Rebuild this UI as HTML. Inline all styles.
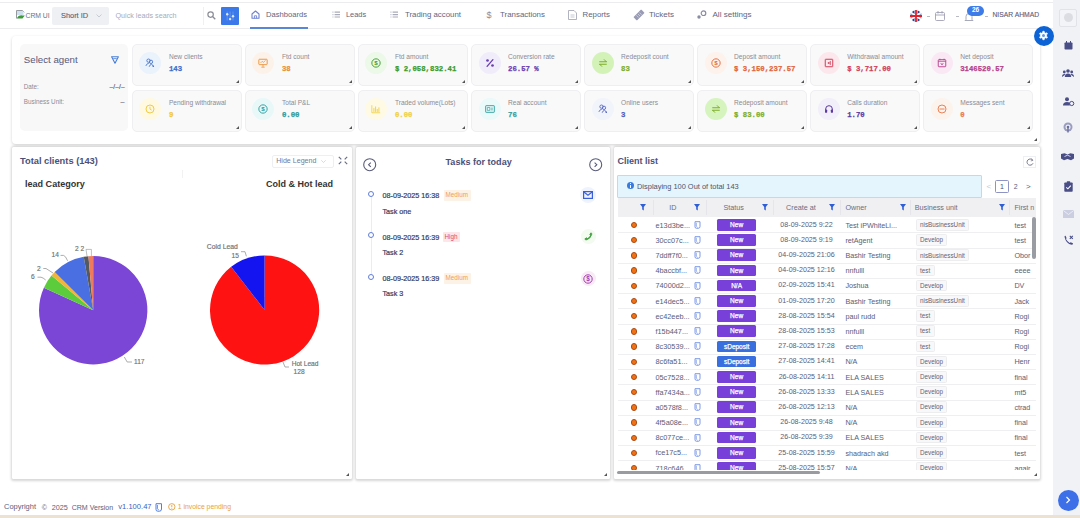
<!DOCTYPE html>
<html><head><meta charset="utf-8">
<style>
*{box-sizing:border-box;margin:0;padding:0}
html,body{width:1080px;height:518px;overflow:hidden;background:#fff;font-family:"Liberation Sans",sans-serif;color:#5b5e7a}
.a{position:absolute}
.t{position:absolute;white-space:nowrap;line-height:1}
svg{position:absolute;overflow:visible}
#top{left:0;top:2px;width:1053px;height:27px;background:#fff;border-top:1px solid #ececee;border-bottom:1px solid #ececee}
#side{left:1053px;top:0;width:27px;height:518px;background:#f1f2f6}
#stats{left:12px;top:36px;width:1028px;height:108px;background:#fff;border-radius:4px;box-shadow:0 1px 3px rgba(0,0,0,.18)}
.card{position:absolute;width:109.5px;height:42px;background:#f9f9fa;border:1px solid #efeff1;border-radius:5px}
.rz{position:absolute;width:0;height:0;border-left:3px solid transparent;border-bottom:3px solid #555}
.panel{position:absolute;top:147px;height:332px;background:#fff;border-radius:1.5px;box-shadow:0 .5px 2.5px 1px rgba(0,0,0,.16)}
</style></head><body>
<div id="top" class="a"></div>
<div id="side" class="a"></div>
<svg style="left:16px;top:9.5px" width="9" height="9" viewBox="0 0 9 9"><path d="M.5 .5h6l1.8 1.8" fill="none" stroke="#8a8f96" stroke-width=".9"/><path d="M.5 .5V8.5" stroke="#8a8f96" stroke-width=".9"/><rect x="1" y="1" width="6.5" height="4" fill="#cfe0f0"/><path d="M.8 8.6 Q2.5 4.8 6.5 5.4 L8.8 5.6 L6.5 8.6z" fill="#3f9a3a"/></svg>
<div class="t" style="left:25.5px;top:13.20px;font-size:6.8px;color:#6c6f80;font-weight:normal;">CRM UI</div>
<div class="a" style="left:52px;top:7px;width:57px;height:18px;background:#eef0f3;border-radius:2px"></div>
<div class="t" style="left:61px;top:12.20px;font-size:7.4px;color:#5d607c;font-weight:normal;-webkit-text-stroke:.12px #5d607c">Short ID</div>
<svg style="left:96px;top:13.5px" width="6" height="4" viewBox="0 0 6 4"><path d="M.5 .5 L3 3 L5.5 .5" fill="none" stroke="#b8bac4" stroke-width=".7"/></svg>
<div class="a" style="left:109px;top:7px;width:95px;height:18px;background:#fff;border-right:1px solid #f0f0f2"></div>
<div class="t" style="left:115.5px;top:12.30px;font-size:7.2px;color:#a9abb8;font-weight:normal;">Quick leads search</div>
<svg style="left:207px;top:11px" width="9" height="9" viewBox="0 0 9 9"><circle cx="3.6" cy="3.6" r="2.7" fill="none" stroke="#8a8c96" stroke-width="1.2"/><path d="M5.8 5.8 L8.3 8.3" stroke="#8a8c96" stroke-width="1.3"/></svg>
<div class="a" style="left:221.3px;top:7px;width:17.5px;height:17.5px;background:#3b78ea;border-radius:1px"></div>
<svg style="left:224px;top:9.5px" width="12" height="12" viewBox="0 0 12 12"><path d="M3.2 1.5v9M6.1 1.5v9M9 1.5v9" stroke="#7fa8f0" stroke-width=".6"/><circle cx="3.2" cy="4.2" r="1.2" fill="#dce8fc"/><circle cx="9" cy="6.2" r="1.2" fill="#dce8fc"/><circle cx="6.1" cy="9.1" r="1.2" fill="#dce8fc"/></svg>
<svg style="left:251px;top:10px" width="9" height="9" viewBox="0 0 9 9"><path d="M1 4 L4.5 1 L8 4 V8.3 H1z" fill="none" stroke="#6f82d2" stroke-width="1.1" stroke-linejoin="round"/><path d="M3.4 8.3V5.8h2.2v2.5" fill="none" stroke="#6f82d2" stroke-width=".9"/></svg>
<div class="t" style="left:266px;top:11.30px;font-size:7.6px;color:#62657f;font-weight:normal;">Dashboards</div>
<div class="a" style="left:250px;top:27px;width:58px;height:1.6px;background:#5a86d6"></div>
<svg style="left:331.5px;top:11px" width="9" height="8" viewBox="0 0 9 8"><path d="M0 1.2h1.8M0 3.6h1.8M0 6h1.8" stroke="#d8d9e0" stroke-width="1.2"/><path d="M2.6 1.2h5.4M2.6 3.6h5.4M2.6 6h5.4" stroke="#a9abb8" stroke-width="1.2"/></svg>
<div class="t" style="left:346px;top:11.40px;font-size:7.4px;color:#62657f;font-weight:normal;">Leads</div>
<svg style="left:389.5px;top:11px" width="9" height="8" viewBox="0 0 9 8"><path d="M0 1.2h1.8M0 3.6h1.8M0 6h1.8" stroke="#d8d9e0" stroke-width="1.2"/><path d="M2.6 1.2h5.4M2.6 3.6h5.4M2.6 6h5.4" stroke="#a9abb8" stroke-width="1.2"/></svg>
<div class="t" style="left:405px;top:11.18px;font-size:7.85px;color:#62657f;font-weight:normal;">Trading account</div>
<div class="t" style="left:486.5px;top:10.60px;font-size:9px;color:#8a8ca0;font-weight:normal;">$</div>
<div class="t" style="left:500px;top:11.15px;font-size:7.9px;color:#62657f;font-weight:normal;">Transactions</div>
<svg style="left:568px;top:10px" width="9" height="10" viewBox="0 0 9 10"><path d="M.5 .5h5.5l2.5 2.5v6.5h-8z" fill="none" stroke="#9ea0b0" stroke-width=".8"/><path d="M2.5 5h4M2.5 7h4" stroke="#b0b2c0" stroke-width=".7"/></svg>
<div class="t" style="left:582.5px;top:11.18px;font-size:7.85px;color:#62657f;font-weight:normal;">Reports</div>
<svg style="left:634px;top:10px" width="10" height="10" viewBox="0 0 10 10"><g transform="rotate(45 5 5)"><rect x="2.6" y="-.5" width="4.8" height="11" rx=".6" fill="#9a9cb6"/><path d="M3.5 3H6.5M3.5 5H6.5M3.5 7H6.5" stroke="#e8e9f0" stroke-width=".6"/></g></svg>
<div class="t" style="left:649px;top:11.10px;font-size:8px;color:#62657f;font-weight:normal;">Tickets</div>
<svg style="left:697px;top:10px" width="10" height="9" viewBox="0 0 10 9"><circle cx="6.5" cy="3.2" r="2.3" fill="none" stroke="#8a8ca4" stroke-width="1.2"/><circle cx="2" cy="7" r="1.7" fill="#8a8ca4"/></svg>
<div class="t" style="left:712.5px;top:11.07px;font-size:8.05px;color:#62657f;font-weight:normal;">All settings</div>
<svg style="left:910px;top:10px" width="12" height="12" viewBox="0 0 12 12"><circle cx="6" cy="6" r="5.8" fill="#2b3a8a"/><path d="M1 2.5 L11 9.5 M11 2.5 L1 9.5" stroke="#fff" stroke-width="1.6"/><path d="M6 0v12M0 6h12" stroke="#fff" stroke-width="3"/><path d="M6 0v12M0 6h12" stroke="#e0202a" stroke-width="1.8"/></svg>
<div class="a" style="left:927px;top:15.5px;width:3px;height:1px;background:#b8bac4"></div>
<svg style="left:935px;top:11px" width="10" height="10" viewBox="0 0 10 10"><rect x=".5" y="1.5" width="9" height="8" rx="1" fill="none" stroke="#a0a2b4" stroke-width=".9"/><path d="M.5 4h9M3 0v2.5M7 0v2.5" stroke="#a0a2b4" stroke-width=".9"/></svg>
<div class="a" style="left:956px;top:15.5px;width:3px;height:1px;background:#b8bac4"></div>
<svg style="left:964px;top:12px" width="10" height="10" viewBox="0 0 10 10"><path d="M2 7.5 V4.5 A3 3 0 0 1 8 4.5 V7.5 L9 8.5 H1z" fill="none" stroke="#9ea0b4" stroke-width=".9"/></svg>
<div class="a" style="left:967px;top:5.5px;width:17px;height:10px;background:#3d7ce8;border-radius:5px"></div>
<div class="t" style="left:875.5px;width:200px;text-align:center;top:7.35px;font-size:6.5px;color:#fff;font-weight:bold;">26</div>
<div class="a" style="left:985px;top:15.5px;width:3px;height:1px;background:#b8bac4"></div>
<div class="t" style="left:992.5px;top:12.42px;font-size:6.75px;color:#5d607c;font-weight:normal;-webkit-text-stroke:.12px #5d607c">NISAR AHMAD</div>
<div class="a" style="left:1059px;top:8.5px;width:18px;height:18px;border:1px solid #e2e3e8;border-radius:2px;background:#f3f4f7"></div>
<div class="a" style="left:1063.5px;top:13px;width:9px;height:9px;border-radius:50%;background:#dcdde2"></div>
<div id="stats" class="a"></div>
<div class="a" style="left:20px;top:44px;width:108px;height:87px;background:#f8f8f9;border-radius:5px"></div>
<div class="t" style="left:23.8px;top:55.45px;font-size:9.7px;color:#5c5f80;font-weight:normal;-webkit-text-stroke:.05px #5c5f80">Select agent</div>
<svg style="left:111px;top:56px" width="8" height="8" viewBox="0 0 8 8"><path d="M.6 .8 H7.4 L4 7.2z" fill="none" stroke="#4a7fd8" stroke-width="1.1" stroke-linejoin="round"/><path d="M2.2 2.6H5.8" stroke="#4a7fd8" stroke-width=".8"/></svg>
<div class="t" style="left:23.8px;top:83.85px;font-size:6.3px;color:#8a8b95;font-weight:normal;">Date:</div>
<div class="t" style="left:-75.2px;width:200px;text-align:right;top:84.00px;font-size:6.6px;color:#55576a;font-weight:normal;letter-spacing:.15px;-webkit-text-stroke:.15px #55576a">–/–/–</div>
<div class="t" style="left:23.8px;top:98.65px;font-size:6.3px;color:#8a8b95;font-weight:normal;">Business Unit:</div>
<div class="t" style="left:-75.5px;width:200px;text-align:right;top:98.00px;font-size:7px;color:#55576a;font-weight:normal;-webkit-text-stroke:.2px #55576a">–</div>
<div class="card" style="left:132.20px;top:44px"></div>
<div class="a" style="left:139.40px;top:52.00px;width:22px;height:22px;border-radius:50%;background:#eaf2fc"></div>
<svg style="left:145.4px;top:58px" width="10" height="10" viewBox="0 0 12 12"><circle cx="4.2" cy="3.2" r="2" fill="none" stroke="#3d6fc9" stroke-width="1"/><circle cx="7.2" cy="4.6" r="2" fill="none" stroke="#3d6fc9" stroke-width="1"/><path d="M1 9.5 Q2.5 6 4.5 6.5 M5 10.5 Q6 7.5 8 7.5 Q9.5 8 10 10.5" fill="none" stroke="#3d6fc9" stroke-width="1"/><circle cx="10" cy="9.8" r=".9" fill="#3d6fc9"/></svg>
<div class="t" style="left:168.9px;top:54.10px;font-size:6.6px;color:#8b8b93;font-weight:normal;">New clients</div>
<div class="t" style="left:168.9px;top:66.25px;font-size:7.3px;color:#3d6fc9;font-weight:bold;font-family:'Liberation Mono',monospace;-webkit-text-stroke:.25px #3d6fc9">143</div>
<div class="rz" style="left:235.70px;top:80.00px"></div>
<div class="card" style="left:245.24px;top:44px"></div>
<div class="a" style="left:252.44px;top:52.00px;width:22px;height:22px;border-radius:50%;background:#fdf2e9"></div>
<svg style="left:258.44px;top:58px" width="10" height="10" viewBox="0 0 12 12"><rect x="1" y="1.5" width="10" height="6.5" rx=".8" fill="none" stroke="#e8923a" stroke-width="1.1"/><path d="M3 6 L5 4 L6.5 5.2 L9 3" fill="none" stroke="#e8923a" stroke-width=".9"/><path d="M6 8v2.5M4 11h4" stroke="#e8923a" stroke-width="1"/></svg>
<div class="t" style="left:281.94px;top:54.10px;font-size:6.6px;color:#8b8b93;font-weight:normal;">Ftd count</div>
<div class="t" style="left:281.94px;top:66.25px;font-size:7.3px;color:#e8923a;font-weight:bold;font-family:'Liberation Mono',monospace;-webkit-text-stroke:.25px #e8923a">38</div>
<div class="rz" style="left:348.74px;top:80.00px"></div>
<div class="card" style="left:358.28px;top:44px"></div>
<div class="a" style="left:365.48px;top:52.00px;width:22px;height:22px;border-radius:50%;background:#ecf8e8"></div>
<svg style="left:371.48px;top:58px" width="10" height="10" viewBox="0 0 12 12"><circle cx="6" cy="6" r="5" fill="none" stroke="#3b9a2c" stroke-width="1.1"/><text x="6" y="8.7" font-size="7.5" text-anchor="middle" fill="#3b9a2c" font-family="Liberation Sans" font-weight="bold">$</text></svg>
<div class="t" style="left:394.98px;top:54.10px;font-size:6.6px;color:#8b8b93;font-weight:normal;">Ftd amount</div>
<div class="t" style="left:394.98px;top:66.25px;font-size:7.3px;color:#3b9a2c;font-weight:bold;font-family:'Liberation Mono',monospace;-webkit-text-stroke:.25px #3b9a2c">$ 2,058,832.41</div>
<div class="rz" style="left:461.78px;top:80.00px"></div>
<div class="card" style="left:471.32px;top:44px"></div>
<div class="a" style="left:478.52px;top:52.00px;width:22px;height:22px;border-radius:50%;background:#f1ecfa"></div>
<svg style="left:484.52px;top:58px" width="10" height="10" viewBox="0 0 12 12"><path d="M9.5 2 L2.5 10" stroke="#6a3fb0" stroke-width="1.6" stroke-linecap="round"/><circle cx="3" cy="3" r="1.6" fill="#6a3fb0"/><circle cx="9" cy="9" r="1.6" fill="#6a3fb0"/></svg>
<div class="t" style="left:508.02px;top:54.10px;font-size:6.6px;color:#8b8b93;font-weight:normal;">Conversion rate</div>
<div class="t" style="left:508.02px;top:66.25px;font-size:7.3px;color:#6a3fb0;font-weight:bold;font-family:'Liberation Mono',monospace;-webkit-text-stroke:.25px #6a3fb0">26.57 %</div>
<div class="rz" style="left:574.82px;top:80.00px"></div>
<div class="card" style="left:584.36px;top:44px"></div>
<div class="a" style="left:591.56px;top:52.00px;width:22px;height:22px;border-radius:50%;background:#d3f2b8"></div>
<svg style="left:597.56px;top:58px" width="10" height="10" viewBox="0 0 12 12"><path d="M2 4.5 H10 M7.5 2 L10 4.5 M10 7.5 H2 M4.5 10 L2 7.5" fill="none" stroke="#7fad2a" stroke-width="1.2" stroke-linecap="round"/></svg>
<div class="t" style="left:621.06px;top:54.10px;font-size:6.6px;color:#8b8b93;font-weight:normal;">Redeposit count</div>
<div class="t" style="left:621.06px;top:66.25px;font-size:7.3px;color:#7fad2a;font-weight:bold;font-family:'Liberation Mono',monospace;-webkit-text-stroke:.25px #7fad2a">83</div>
<div class="rz" style="left:687.86px;top:80.00px"></div>
<div class="card" style="left:697.40px;top:44px"></div>
<div class="a" style="left:704.60px;top:52.00px;width:22px;height:22px;border-radius:50%;background:#fdf2ec"></div>
<svg style="left:710.6px;top:58px" width="10" height="10" viewBox="0 0 12 12"><circle cx="6" cy="6" r="5" fill="none" stroke="#e0663a" stroke-width="1.1"/><text x="6" y="8.7" font-size="7.5" text-anchor="middle" fill="#e0663a" font-family="Liberation Sans" font-weight="bold">$</text></svg>
<div class="t" style="left:734.1px;top:54.10px;font-size:6.6px;color:#8b8b93;font-weight:normal;">Deposit amount</div>
<div class="t" style="left:734.1px;top:66.25px;font-size:7.3px;color:#e0663a;font-weight:bold;font-family:'Liberation Mono',monospace;-webkit-text-stroke:.25px #e0663a">$ 3,150,237.57</div>
<div class="rz" style="left:800.90px;top:80.00px"></div>
<div class="card" style="left:810.44px;top:44px"></div>
<div class="a" style="left:817.64px;top:52.00px;width:22px;height:22px;border-radius:50%;background:#fce8ec"></div>
<svg style="left:823.64px;top:58px" width="10" height="10" viewBox="0 0 12 12"><rect x="1.5" y="1.5" width="9" height="9" rx=".5" fill="none" stroke="#cf3f5a" stroke-width="1.2"/><path d="M7.5 3.5v5 M7.5 6 L5 6 M5.8 4.8 L4.6 6 L5.8 7.2" fill="none" stroke="#cf3f5a" stroke-width="1"/></svg>
<div class="t" style="left:847.14px;top:54.10px;font-size:6.6px;color:#8b8b93;font-weight:normal;">Withdrawal amount</div>
<div class="t" style="left:847.14px;top:66.25px;font-size:7.3px;color:#cf3f5a;font-weight:bold;font-family:'Liberation Mono',monospace;-webkit-text-stroke:.25px #cf3f5a">$ 3,717.00</div>
<div class="rz" style="left:913.94px;top:80.00px"></div>
<div class="card" style="left:923.48px;top:44px"></div>
<div class="a" style="left:930.68px;top:52.00px;width:22px;height:22px;border-radius:50%;background:#fae8f4"></div>
<svg style="left:936.68px;top:58px" width="10" height="10" viewBox="0 0 12 12"><rect x="1.5" y="2" width="9" height="8.5" rx=".8" fill="none" stroke="#b43f8a" stroke-width="1.1"/><path d="M1.5 4H10.5 M3.5 .8v2 M8.5 .8v2 M4.5 6 L6 8.5 L7.5 6" fill="none" stroke="#b43f8a" stroke-width=".9"/></svg>
<div class="t" style="left:960.18px;top:54.10px;font-size:6.6px;color:#8b8b93;font-weight:normal;">Net deposit</div>
<div class="t" style="left:960.18px;top:66.25px;font-size:7.3px;color:#b43f8a;font-weight:bold;font-family:'Liberation Mono',monospace;-webkit-text-stroke:.25px #b43f8a">3146520.57</div>
<div class="rz" style="left:1026.98px;top:80.00px"></div>
<div class="card" style="left:132.20px;top:89.5px"></div>
<div class="a" style="left:139.40px;top:97.50px;width:22px;height:22px;border-radius:50%;background:#fff9e2"></div>
<svg style="left:145.4px;top:103.5px" width="10" height="10" viewBox="0 0 12 12"><circle cx="6" cy="6" r="4.8" fill="none" stroke="#f0c63a" stroke-width="1.1"/><path d="M6 3.2V6.2L8 7.3" fill="none" stroke="#f0c63a" stroke-width="1"/></svg>
<div class="t" style="left:168.9px;top:99.60px;font-size:6.6px;color:#8b8b93;font-weight:normal;">Pending withdrawal</div>
<div class="t" style="left:168.9px;top:111.75px;font-size:7.3px;color:#f0c63a;font-weight:bold;font-family:'Liberation Mono',monospace;-webkit-text-stroke:.25px #f0c63a">9</div>
<div class="rz" style="left:235.70px;top:125.50px"></div>
<div class="card" style="left:245.24px;top:89.5px"></div>
<div class="a" style="left:252.44px;top:97.50px;width:22px;height:22px;border-radius:50%;background:#e8f8f9"></div>
<svg style="left:258.44px;top:103.5px" width="10" height="10" viewBox="0 0 12 12"><circle cx="6" cy="6" r="5" fill="none" stroke="#2a9a9a" stroke-width="1.1"/><text x="6" y="8.7" font-size="7.5" text-anchor="middle" fill="#2a9a9a" font-family="Liberation Sans" font-weight="bold">$</text></svg>
<div class="t" style="left:281.94px;top:99.60px;font-size:6.6px;color:#8b8b93;font-weight:normal;">Total P&amp;L</div>
<div class="t" style="left:281.94px;top:111.75px;font-size:7.3px;color:#2a9a9a;font-weight:bold;font-family:'Liberation Mono',monospace;-webkit-text-stroke:.25px #2a9a9a">0.00</div>
<div class="rz" style="left:348.74px;top:125.50px"></div>
<div class="card" style="left:358.28px;top:89.5px"></div>
<div class="a" style="left:365.48px;top:97.50px;width:22px;height:22px;border-radius:50%;background:#fffae4"></div>
<svg style="left:371.48px;top:103.5px" width="10" height="10" viewBox="0 0 12 12"><path d="M1 1.5V10.5H11" fill="none" stroke="#f0d040" stroke-width="1"/><path d="M3.5 9.5V5 M5.5 9.5V3 M7.5 9.5V6 M9.5 9.5V4" stroke="#f0d040" stroke-width="1.1"/></svg>
<div class="t" style="left:394.98px;top:99.60px;font-size:6.6px;color:#8b8b93;font-weight:normal;">Traded volume(Lots)</div>
<div class="t" style="left:394.98px;top:111.75px;font-size:7.3px;color:#f0d040;font-weight:bold;font-family:'Liberation Mono',monospace;-webkit-text-stroke:.25px #f0d040">0.00</div>
<div class="rz" style="left:461.78px;top:125.50px"></div>
<div class="card" style="left:471.32px;top:89.5px"></div>
<div class="a" style="left:478.52px;top:97.50px;width:22px;height:22px;border-radius:50%;background:#eaf9fa"></div>
<svg style="left:484.52px;top:103.5px" width="10" height="10" viewBox="0 0 12 12"><rect x=".8" y="2" width="10.4" height="8" rx=".6" fill="none" stroke="#2f9f9f" stroke-width="1.1"/><path d="M2.8 4.2h3v3.5h-3z M7 5h2.5 M7 7h2.5" fill="none" stroke="#2f9f9f" stroke-width=".8"/></svg>
<div class="t" style="left:508.02px;top:99.60px;font-size:6.6px;color:#8b8b93;font-weight:normal;">Real account</div>
<div class="t" style="left:508.02px;top:111.75px;font-size:7.3px;color:#2f9f9f;font-weight:bold;font-family:'Liberation Mono',monospace;-webkit-text-stroke:.25px #2f9f9f">76</div>
<div class="rz" style="left:574.82px;top:125.50px"></div>
<div class="card" style="left:584.36px;top:89.5px"></div>
<div class="a" style="left:591.56px;top:97.50px;width:22px;height:22px;border-radius:50%;background:#f2f4fc"></div>
<svg style="left:597.56px;top:103.5px" width="10" height="10" viewBox="0 0 12 12"><circle cx="4.2" cy="3.2" r="2" fill="none" stroke="#4d5fc0" stroke-width="1"/><circle cx="7.2" cy="4.6" r="2" fill="none" stroke="#4d5fc0" stroke-width="1"/><path d="M1 9.5 Q2.5 6 4.5 6.5 M5 10.5 Q6 7.5 8 7.5 Q9.5 8 10 10.5" fill="none" stroke="#4d5fc0" stroke-width="1"/><circle cx="10" cy="9.8" r=".9" fill="#4d5fc0"/></svg>
<div class="t" style="left:621.06px;top:99.60px;font-size:6.6px;color:#8b8b93;font-weight:normal;">Online users</div>
<div class="t" style="left:621.06px;top:111.75px;font-size:7.3px;color:#4d5fc0;font-weight:bold;font-family:'Liberation Mono',monospace;-webkit-text-stroke:.25px #4d5fc0">3</div>
<div class="rz" style="left:687.86px;top:125.50px"></div>
<div class="card" style="left:697.40px;top:89.5px"></div>
<div class="a" style="left:704.60px;top:97.50px;width:22px;height:22px;border-radius:50%;background:#d6f4be"></div>
<svg style="left:710.6px;top:103.5px" width="10" height="10" viewBox="0 0 12 12"><path d="M2 4.5 H10 M7.5 2 L10 4.5 M10 7.5 H2 M4.5 10 L2 7.5" fill="none" stroke="#7fad2a" stroke-width="1.2" stroke-linecap="round"/></svg>
<div class="t" style="left:734.1px;top:99.60px;font-size:6.6px;color:#8b8b93;font-weight:normal;">Redeposit amount</div>
<div class="t" style="left:734.1px;top:111.75px;font-size:7.3px;color:#7fad2a;font-weight:bold;font-family:'Liberation Mono',monospace;-webkit-text-stroke:.25px #7fad2a">$ 83.00</div>
<div class="rz" style="left:800.90px;top:125.50px"></div>
<div class="card" style="left:810.44px;top:89.5px"></div>
<div class="a" style="left:817.64px;top:97.50px;width:22px;height:22px;border-radius:50%;background:#f2eefa"></div>
<svg style="left:823.64px;top:103.5px" width="10" height="10" viewBox="0 0 12 12"><path d="M2 7.5 V6 A4 4 0 0 1 10 6 V7.5" fill="none" stroke="#5a3aa0" stroke-width="1.2"/><rect x="1.2" y="6.5" width="2.6" height="4" rx="1" fill="#5a3aa0"/><rect x="8.2" y="6.5" width="2.6" height="4" rx="1" fill="#5a3aa0"/></svg>
<div class="t" style="left:847.14px;top:99.60px;font-size:6.6px;color:#8b8b93;font-weight:normal;">Calls duration</div>
<div class="t" style="left:847.14px;top:111.75px;font-size:7.3px;color:#5a3aa0;font-weight:bold;font-family:'Liberation Mono',monospace;-webkit-text-stroke:.25px #5a3aa0">1.70</div>
<div class="rz" style="left:913.94px;top:125.50px"></div>
<div class="card" style="left:923.48px;top:89.5px"></div>
<div class="a" style="left:930.68px;top:97.50px;width:22px;height:22px;border-radius:50%;background:#fdf3ed"></div>
<svg style="left:936.68px;top:103.5px" width="10" height="10" viewBox="0 0 12 12"><circle cx="6" cy="6" r="4.8" fill="none" stroke="#e8784a" stroke-width="1.1"/><path d="M3 6h6" stroke="#e8784a" stroke-width="1.1"/></svg>
<div class="t" style="left:960.18px;top:99.60px;font-size:6.6px;color:#8b8b93;font-weight:normal;">Messages sent</div>
<div class="t" style="left:960.18px;top:111.75px;font-size:7.3px;color:#e8784a;font-weight:bold;font-family:'Liberation Mono',monospace;-webkit-text-stroke:.25px #e8784a">0</div>
<div class="rz" style="left:1026.98px;top:125.50px"></div>
<div class="rz" style="left:1034px;top:138px"></div>
<div class="panel" style="left:12px;width:340px"></div>
<div class="panel" style="left:356px;width:253.5px"></div>
<div class="panel" style="left:613.5px;width:426px"></div>
<div class="t" style="left:20px;top:156.55px;font-size:9.3px;color:#4b5078;font-weight:bold;">Total clients (143)</div>
<div class="a" style="left:271.5px;top:155px;width:62px;height:13px;border:1px solid #eeeff2;border-radius:2px;background:#fff"></div>
<div class="t" style="left:276.2px;top:157.75px;font-size:7.1px;color:#75789a;font-weight:normal;">Hide Legend</div>
<svg style="left:321px;top:160px" width="5" height="3" viewBox="0 0 5 3"><path d="M.3 .3 L2.5 2.5 L4.7 .3" fill="none" stroke="#c0c2cc" stroke-width=".6"/></svg>
<svg style="left:338px;top:156px" width="10" height="9" viewBox="0 0 10 9"><path d="M.8 .8 L3.3 3.3 M9.2 .8 L6.7 3.3 M.8 8.2 L3.3 5.7 M9.2 8.2 L6.7 5.7" stroke="#6a6d88" stroke-width="1.2"/></svg>
<div class="t" style="left:25px;top:179.78px;font-size:9.05px;color:#333;font-weight:bold;">lead Category</div>
<div class="t" style="left:266px;top:179.80px;font-size:9.0px;color:#333;font-weight:bold;">Cold &amp; Hot lead</div>
<div class="a" style="left:181.5px;top:170px;width:1px;height:8px;background:#f2f2f2"></div>
<svg style="left:0px;top:0px" width="1080" height="518" viewBox="0 0 1080 518"><path d="M93.2 310.2 L93.20 256.00 A54.2 54.2 0 1 1 43.90 287.68z" fill="#7b45d5"/><path d="M93.2 310.2 L43.90 287.68 A54.2 54.2 0 0 1 51.47 275.61z" fill="#5dcc3c"/><path d="M93.2 310.2 L51.47 275.61 A54.2 54.2 0 0 1 54.66 272.09z" fill="#f2b53a"/><path d="M93.2 310.2 L54.66 272.09 A54.2 54.2 0 0 1 83.72 256.83z" fill="#4a6fe3"/><path d="M93.2 310.2 L83.72 256.83 A54.2 54.2 0 0 1 88.44 256.21z" fill="#555a60"/><path d="M93.2 310.2 L88.44 256.21 A54.2 54.2 0 0 1 93.20 256.00z" fill="#ef7a5c"/><path d="M264.6 310 L264.60 255.40 A54.6 54.6 0 1 1 231.16 266.84z" fill="#ff1212"/><path d="M264.6 310 L231.16 266.84 A54.6 54.6 0 0 1 264.60 255.40z" fill="#1414f0"/><g fill="none" stroke="#8a8a8a" stroke-width=".7"><path d="M124.3 357 L127.2 362 H132"/><path d="M60.5 255.4 H63.5 Q65.5 255.6 67.6 260.8"/><path d="M86 249.4 H91.4 V256 M86 249.4 L87 256" stroke-width=".55"/><path d="M43.3 268.5 H46 L53 273"/><path d="M37.5 277.2 H41 Q43 277.6 45.7 280"/><path d="M241 251.7 H245 L246.4 256.3"/><path d="M283 362 L285 367 H289"/></g></svg>
<div class="t" style="left:134px;top:359.10px;font-size:6.6px;color:#707070;font-weight:normal;-webkit-text-stroke:.15px #707070">117</div>
<div class="t" style="left:51.5px;top:252.30px;font-size:6.6px;color:#707070;font-weight:normal;-webkit-text-stroke:.15px #707070">14</div>
<div class="t" style="left:75px;top:246.10px;font-size:6.6px;color:#707070;font-weight:normal;-webkit-text-stroke:.15px #707070">2 2</div>
<div class="t" style="left:37px;top:265.90px;font-size:6.6px;color:#707070;font-weight:normal;-webkit-text-stroke:.15px #707070">2</div>
<div class="t" style="left:31px;top:274.10px;font-size:6.6px;color:#707070;font-weight:normal;-webkit-text-stroke:.15px #707070">6</div>
<div class="t" style="left:206.8px;top:244.20px;font-size:6.8px;color:#707070;font-weight:normal;-webkit-text-stroke:.15px #707070">Cold Lead</div>
<div class="t" style="left:231.5px;top:252.90px;font-size:6.6px;color:#707070;font-weight:normal;-webkit-text-stroke:.15px #707070">15</div>
<div class="t" style="left:291.7px;top:361.10px;font-size:6.6px;color:#707070;font-weight:normal;-webkit-text-stroke:.15px #707070">Hot Lead</div>
<div class="t" style="left:293.6px;top:369.20px;font-size:6.6px;color:#707070;font-weight:normal;-webkit-text-stroke:.15px #707070">128</div>
<div class="rz" style="left:346px;top:473px"></div>
<div class="t" style="left:445.5px;top:157.67px;font-size:9.06px;color:#4b5078;font-weight:bold;">Tasks for today</div>
<svg style="left:363px;top:158px" width="14" height="14" viewBox="0 0 14 14"><circle cx="6.7" cy="6.7" r="6" fill="none" stroke="#5a5d7a" stroke-width="1.1"/><path d="M7.8 4.6 L5.6 6.7 L7.8 8.8" fill="none" stroke="#5a5d7a" stroke-width="1.1"/></svg>
<svg style="left:588.5px;top:158px" width="14" height="14" viewBox="0 0 14 14"><circle cx="6.7" cy="6.7" r="6" fill="none" stroke="#5a5d7a" stroke-width="1.1"/><path d="M5.6 4.6 L7.8 6.7 L5.6 8.8" fill="none" stroke="#5a5d7a" stroke-width="1.1"/></svg>
<div class="a" style="left:370.5px;top:197px;width:0.9px;height:77px;background:#ebebf0"></div>
<div class="a" style="left:367.9px;top:191.0px;width:6px;height:6px;border-radius:50%;border:1.5px solid #5f7ddc;background:#fff"></div>
<div class="t" style="left:382.5px;top:192.10px;font-size:7.2px;color:#363b62;font-weight:normal;-webkit-text-stroke:.2px #363b62">08-09-2025 16:38</div>
<div class="a" style="left:444px;top:190.20000000000002px;width:26.5px;height:10.5px;background:#fdf2e6;border-radius:1px"></div>
<div class="t" style="left:445.5px;top:192.25px;font-size:6.3px;color:#f0a050;font-weight:normal;">Medium</div>
<div class="t" style="left:382.5px;top:207.50px;font-size:7.2px;color:#363b62;font-weight:normal;-webkit-text-stroke:.2px #363b62">Task one</div>
<div class="a" style="left:580.2px;top:187.3px;width:16px;height:16px;border-radius:50%;background:#eef3fd"></div>
<svg style="left:583.2px;top:191.4px" width="10" height="8" viewBox="0 0 10 8"><rect x=".6" y=".6" width="8.8" height="6.8" fill="none" stroke="#3a5fd8" stroke-width="1.2"/><path d="M.6 .8 L5 4.3 L9.4 .8" fill="none" stroke="#3a5fd8" stroke-width="1.1"/></svg>
<div class="a" style="left:367.9px;top:232.4px;width:6px;height:6px;border-radius:50%;border:1.5px solid #5f7ddc;background:#fff"></div>
<div class="t" style="left:382.5px;top:233.50px;font-size:7.2px;color:#363b62;font-weight:normal;-webkit-text-stroke:.2px #363b62">08-09-2025 16:39</div>
<div class="a" style="left:443px;top:231.60000000000002px;width:17px;height:10.5px;background:#fde6ea;border-radius:1px"></div>
<div class="t" style="left:444.5px;top:233.65px;font-size:6.3px;color:#e04a66;font-weight:normal;">High</div>
<div class="t" style="left:382.5px;top:248.90px;font-size:7.2px;color:#363b62;font-weight:normal;-webkit-text-stroke:.2px #363b62">Task 2</div>
<div class="a" style="left:580.7px;top:229.20000000000002px;width:15px;height:15px;border-radius:50%;background:#f3faf0"></div>
<svg style="left:583.7px;top:232.20000000000002px" width="9" height="9" viewBox="0 0 9 9"><g transform="translate(9 0) scale(-1 1)"><path d="M1.2 2.2 Q1 1 2.2 .9 L3.2 2.8 L2.4 3.6 Q3.5 5.6 5.4 6.6 L6.2 5.8 L8.1 6.8 Q8 8 6.8 7.9 Q2.5 7 1.2 2.2z" fill="#4aa84a" stroke="#3b9a3b" stroke-width=".8"/></g></svg>
<div class="a" style="left:367.9px;top:273.8px;width:6px;height:6px;border-radius:50%;border:1.5px solid #5f7ddc;background:#fff"></div>
<div class="t" style="left:382.5px;top:274.90px;font-size:7.2px;color:#363b62;font-weight:normal;-webkit-text-stroke:.2px #363b62">08-09-2025 16:39</div>
<div class="a" style="left:444px;top:273.0px;width:26.5px;height:10.5px;background:#fdf2e6;border-radius:1px"></div>
<div class="t" style="left:445.5px;top:275.05px;font-size:6.3px;color:#f0a050;font-weight:normal;">Medium</div>
<div class="t" style="left:382.5px;top:290.30px;font-size:7.2px;color:#363b62;font-weight:normal;-webkit-text-stroke:.2px #363b62">Task 3</div>
<div class="a" style="left:580.7px;top:271.2px;width:15px;height:15px;border-radius:50%;background:#f8ebf6"></div>
<svg style="left:583.2px;top:273.7px" width="10" height="10" viewBox="0 0 10 10"><circle cx="5" cy="5" r="4.2" fill="none" stroke="#a03cb0" stroke-width="1"/><text x="5" y="7.3" font-size="6.5" text-anchor="middle" fill="#a03cb0" font-family="Liberation Sans" font-weight="bold">$</text></svg>
<div class="rz" style="left:603.5px;top:473px"></div>
<div class="t" style="left:617.5px;top:157.00px;font-size:9.0px;color:#4b5078;font-weight:bold;">Client list</div>
<div class="a" style="left:1022.5px;top:155.5px;width:13.5px;height:12px;border:1px solid #eeeff2;background:#fff"></div>
<svg style="left:1025.5px;top:157.8px" width="8" height="8" viewBox="0 0 8 8"><path d="M6.6 2.2 A3.1 3.1 0 1 0 7 5.3" fill="none" stroke="#6a6d80" stroke-width=".9"/><path d="M5.6 .6 L6.8 2.4 L4.8 2.9" fill="none" stroke="#6a6d80" stroke-width=".7"/></svg>
<div class="a" style="left:617px;top:175px;width:364.5px;height:22.5px;background:#e5f5fd;border:1px solid #b3dff4;border-radius:1px"></div>
<div class="a" style="left:626.5px;top:182px;width:7px;height:7px;border-radius:50%;background:#3a7be0"></div>
<div class="a" style="left:629.5px;top:183px;width:1px;height:1px;background:#fff"></div>
<div class="a" style="left:629.5px;top:184.5px;width:1px;height:3px;background:#fff"></div>
<div class="t" style="left:637px;top:183.08px;font-size:7.44px;color:#4f546e;font-weight:normal;">Displaying 100 Out of total 143</div>
<div class="t" style="left:986.5px;top:182.50px;font-size:8px;color:#c8cad2;font-weight:normal;">&lt;</div>
<div class="a" style="left:995px;top:180.3px;width:14px;height:12.6px;border:1px solid #8d93c4;border-radius:1.5px;background:#fff"></div>
<div class="t" style="left:902px;width:200px;text-align:center;top:183.30px;font-size:7px;color:#4b4f6a;font-weight:normal;">1</div>
<div class="t" style="left:1013.7px;top:183.30px;font-size:7px;color:#5a5d78;font-weight:normal;">2</div>
<div class="t" style="left:1026px;top:182.50px;font-size:8px;color:#5a5d78;font-weight:normal;">&gt;</div>
<div class="a" style="left:617.5px;top:198.3px;width:418.5px;height:18.5px;background:#f0f0f2"></div>
<svg style="left:640px;top:204.1px" width="6" height="7" viewBox="0 0 6 7"><path d="M0 0 H6 L3.8 3 V6.5 L2.2 5.5 V3z" fill="#2f5fd6"/></svg>
<div class="t" style="left:572.8px;width:200px;text-align:center;top:204.00px;font-size:7.2px;color:#6a6d80;font-weight:normal;">ID</div>
<svg style="left:693.8px;top:204.1px" width="6" height="7" viewBox="0 0 6 7"><path d="M0 0 H6 L3.8 3 V6.5 L2.2 5.5 V3z" fill="#2f5fd6"/></svg>
<div class="t" style="left:633.6px;width:200px;text-align:center;top:204.00px;font-size:7.2px;color:#6a6d80;font-weight:normal;">Status</div>
<svg style="left:762px;top:204.1px" width="6" height="7" viewBox="0 0 6 7"><path d="M0 0 H6 L3.8 3 V6.5 L2.2 5.5 V3z" fill="#2f5fd6"/></svg>
<div class="t" style="left:700.9px;width:200px;text-align:center;top:204.00px;font-size:7.2px;color:#6a6d80;font-weight:normal;">Create at</div>
<svg style="left:829.3px;top:204.1px" width="6" height="7" viewBox="0 0 6 7"><path d="M0 0 H6 L3.8 3 V6.5 L2.2 5.5 V3z" fill="#2f5fd6"/></svg>
<div class="t" style="left:845.4px;top:204.00px;font-size:7.2px;color:#6a6d80;font-weight:normal;">Owner</div>
<svg style="left:899.8px;top:204.1px" width="6" height="7" viewBox="0 0 6 7"><path d="M0 0 H6 L3.8 3 V6.5 L2.2 5.5 V3z" fill="#2f5fd6"/></svg>
<div class="t" style="left:914.8px;top:204.00px;font-size:7.2px;color:#6a6d80;font-weight:normal;">Business unit</div>
<svg style="left:998.6px;top:204.1px" width="6" height="7" viewBox="0 0 6 7"><path d="M0 0 H6 L3.8 3 V6.5 L2.2 5.5 V3z" fill="#2f5fd6"/></svg>
<div class="t" style="left:1014.4px;top:204.00px;font-size:7.2px;color:#6a6d80;font-weight:normal;">First n</div>
<div class="a" style="left:653px;top:200px;width:0.7px;height:15px;background:#e6e6ea"></div>
<div class="a" style="left:705.5px;top:200px;width:0.7px;height:15px;background:#e6e6ea"></div>
<div class="a" style="left:773px;top:200px;width:0.7px;height:15px;background:#e6e6ea"></div>
<div class="a" style="left:840px;top:200px;width:0.7px;height:15px;background:#e6e6ea"></div>
<div class="a" style="left:910px;top:200px;width:0.7px;height:15px;background:#e6e6ea"></div>
<div class="a" style="left:1009px;top:200px;width:0.7px;height:15px;background:#e6e6ea"></div>
<div class="a" style="left:617.5px;top:216.8px;width:418.5px;height:253px;overflow:hidden">
<div class="a" style="left:13.30px;top:5.10px;width:6.4px;height:6.4px;border-radius:50%;background:#f27212;border:1px solid #a94a14"></div>
<div class="t" style="left:38.0px;top:4.85px;font-size:7.3px;color:#5a5d78;font-weight:normal;">e13d3be...</div>
<svg style="left:76.3px;top:4.1px" width="7" height="8" viewBox="0 0 7 8"><path d="M1 .7 H6 V5.5 Q6 7.3 4.2 7.3 H2.6 Q1 7.3 1 5.8z" fill="none" stroke="#6f8fe6" stroke-width=".9"/><path d="M2.3 1.8 V5.2 L3.6 6.4" fill="none" stroke="#6f8fe6" stroke-width=".7"/></svg>
<div class="a" style="left:99.60px;top:2.30px;width:39px;height:11.6px;border-radius:1.5px;background:#7840d8"></div>
<div class="t" style="left:19.099999999999994px;width:200px;text-align:center;top:5.25px;font-size:6.5px;color:#fff;font-weight:normal;-webkit-text-stroke:.25px #fff">New</div>
<div class="t" style="left:89.0px;width:200px;text-align:center;top:4.93px;font-size:7.14px;color:#5a5d78;font-weight:normal;">08-09-2025 9:22</div>
<div class="t" style="left:227.9px;top:4.90px;font-size:7.2px;color:#5a5d78;font-weight:normal;">Test iPWhiteLi...</div>
<div class="a" style="left:298.30px;top:2.30px;width:53px;height:11.6px;border-radius:1.5px;background:#f8f8fa;border:1px solid #ededf0"></div>
<div class="t" style="left:302.5px;top:5.35px;font-size:6.3px;color:#5f6275;font-weight:normal;">nisBusinessUnit</div>
<div class="t" style="left:396.9px;top:4.90px;font-size:7.2px;color:#5a5d78;font-weight:normal;">test</div>
<div class="a" style="left:0px;top:15.69px;width:418.5px;height:0.7px;background:#efeff2"></div>
<div class="a" style="left:13.30px;top:20.29px;width:6.4px;height:6.4px;border-radius:50%;background:#f27212;border:1px solid #a94a14"></div>
<div class="t" style="left:38.0px;top:20.04px;font-size:7.3px;color:#5a5d78;font-weight:normal;">30cc07c...</div>
<svg style="left:76.3px;top:19.29px" width="7" height="8" viewBox="0 0 7 8"><path d="M1 .7 H6 V5.5 Q6 7.3 4.2 7.3 H2.6 Q1 7.3 1 5.8z" fill="none" stroke="#6f8fe6" stroke-width=".9"/><path d="M2.3 1.8 V5.2 L3.6 6.4" fill="none" stroke="#6f8fe6" stroke-width=".7"/></svg>
<div class="a" style="left:99.60px;top:17.49px;width:39px;height:11.6px;border-radius:1.5px;background:#7840d8"></div>
<div class="t" style="left:19.099999999999994px;width:200px;text-align:center;top:20.44px;font-size:6.5px;color:#fff;font-weight:normal;-webkit-text-stroke:.25px #fff">New</div>
<div class="t" style="left:89.0px;width:200px;text-align:center;top:20.12px;font-size:7.14px;color:#5a5d78;font-weight:normal;">08-09-2025 9:19</div>
<div class="t" style="left:227.9px;top:20.09px;font-size:7.2px;color:#5a5d78;font-weight:normal;">retAgent</div>
<div class="a" style="left:298.30px;top:17.49px;width:31.5px;height:11.6px;border-radius:1.5px;background:#f8f8fa;border:1px solid #ededf0"></div>
<div class="t" style="left:302.5px;top:20.54px;font-size:6.3px;color:#5f6275;font-weight:normal;">Develop</div>
<div class="t" style="left:396.9px;top:20.09px;font-size:7.2px;color:#5a5d78;font-weight:normal;">test</div>
<div class="a" style="left:0px;top:30.88px;width:418.5px;height:0.7px;background:#efeff2"></div>
<div class="a" style="left:13.30px;top:35.48px;width:6.4px;height:6.4px;border-radius:50%;background:#f27212;border:1px solid #a94a14"></div>
<div class="t" style="left:38.0px;top:35.23px;font-size:7.3px;color:#5a5d78;font-weight:normal;">7ddff7f0...</div>
<svg style="left:76.3px;top:34.48px" width="7" height="8" viewBox="0 0 7 8"><path d="M1 .7 H6 V5.5 Q6 7.3 4.2 7.3 H2.6 Q1 7.3 1 5.8z" fill="none" stroke="#6f8fe6" stroke-width=".9"/><path d="M2.3 1.8 V5.2 L3.6 6.4" fill="none" stroke="#6f8fe6" stroke-width=".7"/></svg>
<div class="a" style="left:99.60px;top:32.68px;width:39px;height:11.6px;border-radius:1.5px;background:#7840d8"></div>
<div class="t" style="left:19.099999999999994px;width:200px;text-align:center;top:35.63px;font-size:6.5px;color:#fff;font-weight:normal;-webkit-text-stroke:.25px #fff">New</div>
<div class="t" style="left:89.0px;width:200px;text-align:center;top:35.31px;font-size:7.14px;color:#5a5d78;font-weight:normal;">04-09-2025 21:06</div>
<div class="t" style="left:227.9px;top:35.28px;font-size:7.2px;color:#5a5d78;font-weight:normal;">Bashir Testing</div>
<div class="a" style="left:298.30px;top:32.68px;width:53px;height:11.6px;border-radius:1.5px;background:#f8f8fa;border:1px solid #ededf0"></div>
<div class="t" style="left:302.5px;top:35.73px;font-size:6.3px;color:#5f6275;font-weight:normal;">nisBusinessUnit</div>
<div class="t" style="left:396.9px;top:35.28px;font-size:7.2px;color:#5a5d78;font-weight:normal;">Obor</div>
<div class="a" style="left:0px;top:46.07px;width:418.5px;height:0.7px;background:#efeff2"></div>
<div class="a" style="left:13.30px;top:50.67px;width:6.4px;height:6.4px;border-radius:50%;background:#f27212;border:1px solid #a94a14"></div>
<div class="t" style="left:38.0px;top:50.42px;font-size:7.3px;color:#5a5d78;font-weight:normal;">4baccbf...</div>
<svg style="left:76.3px;top:49.67px" width="7" height="8" viewBox="0 0 7 8"><path d="M1 .7 H6 V5.5 Q6 7.3 4.2 7.3 H2.6 Q1 7.3 1 5.8z" fill="none" stroke="#6f8fe6" stroke-width=".9"/><path d="M2.3 1.8 V5.2 L3.6 6.4" fill="none" stroke="#6f8fe6" stroke-width=".7"/></svg>
<div class="a" style="left:99.60px;top:47.87px;width:39px;height:11.6px;border-radius:1.5px;background:#7840d8"></div>
<div class="t" style="left:19.099999999999994px;width:200px;text-align:center;top:50.82px;font-size:6.5px;color:#fff;font-weight:normal;-webkit-text-stroke:.25px #fff">New</div>
<div class="t" style="left:89.0px;width:200px;text-align:center;top:50.50px;font-size:7.14px;color:#5a5d78;font-weight:normal;">04-09-2025 12:16</div>
<div class="t" style="left:227.9px;top:50.47px;font-size:7.2px;color:#5a5d78;font-weight:normal;">nnfulll</div>
<div class="a" style="left:298.30px;top:47.87px;width:19px;height:11.6px;border-radius:1.5px;background:#f8f8fa;border:1px solid #ededf0"></div>
<div class="t" style="left:302.5px;top:50.92px;font-size:6.3px;color:#5f6275;font-weight:normal;">test</div>
<div class="t" style="left:396.9px;top:50.47px;font-size:7.2px;color:#5a5d78;font-weight:normal;">eeee</div>
<div class="a" style="left:0px;top:61.26px;width:418.5px;height:0.7px;background:#efeff2"></div>
<div class="a" style="left:13.30px;top:65.86px;width:6.4px;height:6.4px;border-radius:50%;background:#f27212;border:1px solid #a94a14"></div>
<div class="t" style="left:38.0px;top:65.61px;font-size:7.3px;color:#5a5d78;font-weight:normal;">74000d2...</div>
<svg style="left:76.3px;top:64.86px" width="7" height="8" viewBox="0 0 7 8"><path d="M1 .7 H6 V5.5 Q6 7.3 4.2 7.3 H2.6 Q1 7.3 1 5.8z" fill="none" stroke="#6f8fe6" stroke-width=".9"/><path d="M2.3 1.8 V5.2 L3.6 6.4" fill="none" stroke="#6f8fe6" stroke-width=".7"/></svg>
<div class="a" style="left:99.60px;top:63.06px;width:39px;height:11.6px;border-radius:1.5px;background:#7840d8"></div>
<div class="t" style="left:19.099999999999994px;width:200px;text-align:center;top:66.01px;font-size:6.5px;color:#fff;font-weight:normal;-webkit-text-stroke:.25px #fff">N/A</div>
<div class="t" style="left:89.0px;width:200px;text-align:center;top:65.69px;font-size:7.14px;color:#5a5d78;font-weight:normal;">02-09-2025 15:41</div>
<div class="t" style="left:227.9px;top:65.66px;font-size:7.2px;color:#5a5d78;font-weight:normal;">Joshua</div>
<div class="a" style="left:298.30px;top:63.06px;width:31.5px;height:11.6px;border-radius:1.5px;background:#f8f8fa;border:1px solid #ededf0"></div>
<div class="t" style="left:302.5px;top:66.11px;font-size:6.3px;color:#5f6275;font-weight:normal;">Develop</div>
<div class="t" style="left:396.9px;top:65.66px;font-size:7.2px;color:#5a5d78;font-weight:normal;">DV</div>
<div class="a" style="left:0px;top:76.45px;width:418.5px;height:0.7px;background:#efeff2"></div>
<div class="a" style="left:13.30px;top:81.05px;width:6.4px;height:6.4px;border-radius:50%;background:#f27212;border:1px solid #a94a14"></div>
<div class="t" style="left:38.0px;top:80.80px;font-size:7.3px;color:#5a5d78;font-weight:normal;">e14dec5...</div>
<svg style="left:76.3px;top:80.05px" width="7" height="8" viewBox="0 0 7 8"><path d="M1 .7 H6 V5.5 Q6 7.3 4.2 7.3 H2.6 Q1 7.3 1 5.8z" fill="none" stroke="#6f8fe6" stroke-width=".9"/><path d="M2.3 1.8 V5.2 L3.6 6.4" fill="none" stroke="#6f8fe6" stroke-width=".7"/></svg>
<div class="a" style="left:99.60px;top:78.25px;width:39px;height:11.6px;border-radius:1.5px;background:#7840d8"></div>
<div class="t" style="left:19.099999999999994px;width:200px;text-align:center;top:81.20px;font-size:6.5px;color:#fff;font-weight:normal;-webkit-text-stroke:.25px #fff">New</div>
<div class="t" style="left:89.0px;width:200px;text-align:center;top:80.88px;font-size:7.14px;color:#5a5d78;font-weight:normal;">01-09-2025 17:20</div>
<div class="t" style="left:227.9px;top:80.85px;font-size:7.2px;color:#5a5d78;font-weight:normal;">Bashir Testing</div>
<div class="a" style="left:298.30px;top:78.25px;width:53px;height:11.6px;border-radius:1.5px;background:#f8f8fa;border:1px solid #ededf0"></div>
<div class="t" style="left:302.5px;top:81.30px;font-size:6.3px;color:#5f6275;font-weight:normal;">nisBusinessUnit</div>
<div class="t" style="left:396.9px;top:80.85px;font-size:7.2px;color:#5a5d78;font-weight:normal;">Jack</div>
<div class="a" style="left:0px;top:91.64px;width:418.5px;height:0.7px;background:#efeff2"></div>
<div class="a" style="left:13.30px;top:96.24px;width:6.4px;height:6.4px;border-radius:50%;background:#f27212;border:1px solid #a94a14"></div>
<div class="t" style="left:38.0px;top:95.99px;font-size:7.3px;color:#5a5d78;font-weight:normal;">ec42eeb...</div>
<svg style="left:76.3px;top:95.24px" width="7" height="8" viewBox="0 0 7 8"><path d="M1 .7 H6 V5.5 Q6 7.3 4.2 7.3 H2.6 Q1 7.3 1 5.8z" fill="none" stroke="#6f8fe6" stroke-width=".9"/><path d="M2.3 1.8 V5.2 L3.6 6.4" fill="none" stroke="#6f8fe6" stroke-width=".7"/></svg>
<div class="a" style="left:99.60px;top:93.44px;width:39px;height:11.6px;border-radius:1.5px;background:#7840d8"></div>
<div class="t" style="left:19.099999999999994px;width:200px;text-align:center;top:96.39px;font-size:6.5px;color:#fff;font-weight:normal;-webkit-text-stroke:.25px #fff">New</div>
<div class="t" style="left:89.0px;width:200px;text-align:center;top:96.07px;font-size:7.14px;color:#5a5d78;font-weight:normal;">28-08-2025 15:54</div>
<div class="t" style="left:227.9px;top:96.04px;font-size:7.2px;color:#5a5d78;font-weight:normal;">paul rudd</div>
<div class="a" style="left:298.30px;top:93.44px;width:19px;height:11.6px;border-radius:1.5px;background:#f8f8fa;border:1px solid #ededf0"></div>
<div class="t" style="left:302.5px;top:96.49px;font-size:6.3px;color:#5f6275;font-weight:normal;">test</div>
<div class="t" style="left:396.9px;top:96.04px;font-size:7.2px;color:#5a5d78;font-weight:normal;">Rogi</div>
<div class="a" style="left:0px;top:106.83px;width:418.5px;height:0.7px;background:#efeff2"></div>
<div class="a" style="left:13.30px;top:111.43px;width:6.4px;height:6.4px;border-radius:50%;background:#f27212;border:1px solid #a94a14"></div>
<div class="t" style="left:38.0px;top:111.18px;font-size:7.3px;color:#5a5d78;font-weight:normal;">f15b447...</div>
<svg style="left:76.3px;top:110.43px" width="7" height="8" viewBox="0 0 7 8"><path d="M1 .7 H6 V5.5 Q6 7.3 4.2 7.3 H2.6 Q1 7.3 1 5.8z" fill="none" stroke="#6f8fe6" stroke-width=".9"/><path d="M2.3 1.8 V5.2 L3.6 6.4" fill="none" stroke="#6f8fe6" stroke-width=".7"/></svg>
<div class="a" style="left:99.60px;top:108.63px;width:39px;height:11.6px;border-radius:1.5px;background:#7840d8"></div>
<div class="t" style="left:19.099999999999994px;width:200px;text-align:center;top:111.58px;font-size:6.5px;color:#fff;font-weight:normal;-webkit-text-stroke:.25px #fff">New</div>
<div class="t" style="left:89.0px;width:200px;text-align:center;top:111.26px;font-size:7.14px;color:#5a5d78;font-weight:normal;">28-08-2025 15:53</div>
<div class="t" style="left:227.9px;top:111.23px;font-size:7.2px;color:#5a5d78;font-weight:normal;">nnfulll</div>
<div class="a" style="left:298.30px;top:108.63px;width:19px;height:11.6px;border-radius:1.5px;background:#f8f8fa;border:1px solid #ededf0"></div>
<div class="t" style="left:302.5px;top:111.68px;font-size:6.3px;color:#5f6275;font-weight:normal;">test</div>
<div class="t" style="left:396.9px;top:111.23px;font-size:7.2px;color:#5a5d78;font-weight:normal;">Rogi</div>
<div class="a" style="left:0px;top:122.02px;width:418.5px;height:0.7px;background:#efeff2"></div>
<div class="a" style="left:13.30px;top:126.62px;width:6.4px;height:6.4px;border-radius:50%;background:#f27212;border:1px solid #a94a14"></div>
<div class="t" style="left:38.0px;top:126.37px;font-size:7.3px;color:#5a5d78;font-weight:normal;">8c30539...</div>
<svg style="left:76.3px;top:125.62px" width="7" height="8" viewBox="0 0 7 8"><path d="M1 .7 H6 V5.5 Q6 7.3 4.2 7.3 H2.6 Q1 7.3 1 5.8z" fill="none" stroke="#6f8fe6" stroke-width=".9"/><path d="M2.3 1.8 V5.2 L3.6 6.4" fill="none" stroke="#6f8fe6" stroke-width=".7"/></svg>
<div class="a" style="left:99.60px;top:123.82px;width:39px;height:11.6px;border-radius:1.5px;background:#3a6fe0"></div>
<div class="t" style="left:19.099999999999994px;width:200px;text-align:center;top:126.77px;font-size:6.5px;color:#fff;font-weight:normal;-webkit-text-stroke:.25px #fff">sDeposit</div>
<div class="t" style="left:89.0px;width:200px;text-align:center;top:126.45px;font-size:7.14px;color:#5a5d78;font-weight:normal;">27-08-2025 17:28</div>
<div class="t" style="left:227.9px;top:126.42px;font-size:7.2px;color:#5a5d78;font-weight:normal;">ecem</div>
<div class="a" style="left:298.30px;top:123.82px;width:19px;height:11.6px;border-radius:1.5px;background:#f8f8fa;border:1px solid #ededf0"></div>
<div class="t" style="left:302.5px;top:126.87px;font-size:6.3px;color:#5f6275;font-weight:normal;">test</div>
<div class="t" style="left:396.9px;top:126.42px;font-size:7.2px;color:#5a5d78;font-weight:normal;">Rogi</div>
<div class="a" style="left:0px;top:137.21px;width:418.5px;height:0.7px;background:#efeff2"></div>
<div class="a" style="left:13.30px;top:141.81px;width:6.4px;height:6.4px;border-radius:50%;background:#f27212;border:1px solid #a94a14"></div>
<div class="t" style="left:38.0px;top:141.56px;font-size:7.3px;color:#5a5d78;font-weight:normal;">8c6fa51...</div>
<svg style="left:76.3px;top:140.81px" width="7" height="8" viewBox="0 0 7 8"><path d="M1 .7 H6 V5.5 Q6 7.3 4.2 7.3 H2.6 Q1 7.3 1 5.8z" fill="none" stroke="#6f8fe6" stroke-width=".9"/><path d="M2.3 1.8 V5.2 L3.6 6.4" fill="none" stroke="#6f8fe6" stroke-width=".7"/></svg>
<div class="a" style="left:99.60px;top:139.01px;width:39px;height:11.6px;border-radius:1.5px;background:#3a6fe0"></div>
<div class="t" style="left:19.099999999999994px;width:200px;text-align:center;top:141.96px;font-size:6.5px;color:#fff;font-weight:normal;-webkit-text-stroke:.25px #fff">sDeposit</div>
<div class="t" style="left:89.0px;width:200px;text-align:center;top:141.64px;font-size:7.14px;color:#5a5d78;font-weight:normal;">27-08-2025 14:41</div>
<div class="t" style="left:227.9px;top:141.61px;font-size:7.2px;color:#5a5d78;font-weight:normal;">N/A</div>
<div class="a" style="left:298.30px;top:139.01px;width:31.5px;height:11.6px;border-radius:1.5px;background:#f8f8fa;border:1px solid #ededf0"></div>
<div class="t" style="left:302.5px;top:142.06px;font-size:6.3px;color:#5f6275;font-weight:normal;">Develop</div>
<div class="t" style="left:396.9px;top:141.61px;font-size:7.2px;color:#5a5d78;font-weight:normal;">Henr</div>
<div class="a" style="left:0px;top:152.4px;width:418.5px;height:0.7px;background:#efeff2"></div>
<div class="a" style="left:13.30px;top:157.00px;width:6.4px;height:6.4px;border-radius:50%;background:#f27212;border:1px solid #a94a14"></div>
<div class="t" style="left:38.0px;top:156.75px;font-size:7.3px;color:#5a5d78;font-weight:normal;">05c7528...</div>
<svg style="left:76.3px;top:156.0px" width="7" height="8" viewBox="0 0 7 8"><path d="M1 .7 H6 V5.5 Q6 7.3 4.2 7.3 H2.6 Q1 7.3 1 5.8z" fill="none" stroke="#6f8fe6" stroke-width=".9"/><path d="M2.3 1.8 V5.2 L3.6 6.4" fill="none" stroke="#6f8fe6" stroke-width=".7"/></svg>
<div class="a" style="left:99.60px;top:154.20px;width:39px;height:11.6px;border-radius:1.5px;background:#7840d8"></div>
<div class="t" style="left:19.099999999999994px;width:200px;text-align:center;top:157.15px;font-size:6.5px;color:#fff;font-weight:normal;-webkit-text-stroke:.25px #fff">New</div>
<div class="t" style="left:89.0px;width:200px;text-align:center;top:156.83px;font-size:7.14px;color:#5a5d78;font-weight:normal;">26-08-2025 14:11</div>
<div class="t" style="left:227.9px;top:156.80px;font-size:7.2px;color:#5a5d78;font-weight:normal;">ELA SALES</div>
<div class="a" style="left:298.30px;top:154.20px;width:31.5px;height:11.6px;border-radius:1.5px;background:#f8f8fa;border:1px solid #ededf0"></div>
<div class="t" style="left:302.5px;top:157.25px;font-size:6.3px;color:#5f6275;font-weight:normal;">Develop</div>
<div class="t" style="left:396.9px;top:156.80px;font-size:7.2px;color:#5a5d78;font-weight:normal;">final</div>
<div class="a" style="left:0px;top:167.59px;width:418.5px;height:0.7px;background:#efeff2"></div>
<div class="a" style="left:13.30px;top:172.19px;width:6.4px;height:6.4px;border-radius:50%;background:#f27212;border:1px solid #a94a14"></div>
<div class="t" style="left:38.0px;top:171.94px;font-size:7.3px;color:#5a5d78;font-weight:normal;">ffa7434a...</div>
<svg style="left:76.3px;top:171.19px" width="7" height="8" viewBox="0 0 7 8"><path d="M1 .7 H6 V5.5 Q6 7.3 4.2 7.3 H2.6 Q1 7.3 1 5.8z" fill="none" stroke="#6f8fe6" stroke-width=".9"/><path d="M2.3 1.8 V5.2 L3.6 6.4" fill="none" stroke="#6f8fe6" stroke-width=".7"/></svg>
<div class="a" style="left:99.60px;top:169.39px;width:39px;height:11.6px;border-radius:1.5px;background:#7840d8"></div>
<div class="t" style="left:19.099999999999994px;width:200px;text-align:center;top:172.34px;font-size:6.5px;color:#fff;font-weight:normal;-webkit-text-stroke:.25px #fff">New</div>
<div class="t" style="left:89.0px;width:200px;text-align:center;top:172.02px;font-size:7.14px;color:#5a5d78;font-weight:normal;">26-08-2025 13:33</div>
<div class="t" style="left:227.9px;top:171.99px;font-size:7.2px;color:#5a5d78;font-weight:normal;">ELA SALES</div>
<div class="a" style="left:298.30px;top:169.39px;width:31.5px;height:11.6px;border-radius:1.5px;background:#f8f8fa;border:1px solid #ededf0"></div>
<div class="t" style="left:302.5px;top:172.44px;font-size:6.3px;color:#5f6275;font-weight:normal;">Develop</div>
<div class="t" style="left:396.9px;top:171.99px;font-size:7.2px;color:#5a5d78;font-weight:normal;">mt5</div>
<div class="a" style="left:0px;top:182.78px;width:418.5px;height:0.7px;background:#efeff2"></div>
<div class="a" style="left:13.30px;top:187.38px;width:6.4px;height:6.4px;border-radius:50%;background:#f27212;border:1px solid #a94a14"></div>
<div class="t" style="left:38.0px;top:187.13px;font-size:7.3px;color:#5a5d78;font-weight:normal;">a0578f8...</div>
<svg style="left:76.3px;top:186.38px" width="7" height="8" viewBox="0 0 7 8"><path d="M1 .7 H6 V5.5 Q6 7.3 4.2 7.3 H2.6 Q1 7.3 1 5.8z" fill="none" stroke="#6f8fe6" stroke-width=".9"/><path d="M2.3 1.8 V5.2 L3.6 6.4" fill="none" stroke="#6f8fe6" stroke-width=".7"/></svg>
<div class="a" style="left:99.60px;top:184.58px;width:39px;height:11.6px;border-radius:1.5px;background:#7840d8"></div>
<div class="t" style="left:19.099999999999994px;width:200px;text-align:center;top:187.53px;font-size:6.5px;color:#fff;font-weight:normal;-webkit-text-stroke:.25px #fff">New</div>
<div class="t" style="left:89.0px;width:200px;text-align:center;top:187.21px;font-size:7.14px;color:#5a5d78;font-weight:normal;">26-08-2025 12:13</div>
<div class="t" style="left:227.9px;top:187.18px;font-size:7.2px;color:#5a5d78;font-weight:normal;">N/A</div>
<div class="a" style="left:298.30px;top:184.58px;width:31.5px;height:11.6px;border-radius:1.5px;background:#f8f8fa;border:1px solid #ededf0"></div>
<div class="t" style="left:302.5px;top:187.63px;font-size:6.3px;color:#5f6275;font-weight:normal;">Develop</div>
<div class="t" style="left:396.9px;top:187.18px;font-size:7.2px;color:#5a5d78;font-weight:normal;">ctrad</div>
<div class="a" style="left:0px;top:197.97px;width:418.5px;height:0.7px;background:#efeff2"></div>
<div class="a" style="left:13.30px;top:202.57px;width:6.4px;height:6.4px;border-radius:50%;background:#f27212;border:1px solid #a94a14"></div>
<div class="t" style="left:38.0px;top:202.32px;font-size:7.3px;color:#5a5d78;font-weight:normal;">4f5a08e...</div>
<svg style="left:76.3px;top:201.57px" width="7" height="8" viewBox="0 0 7 8"><path d="M1 .7 H6 V5.5 Q6 7.3 4.2 7.3 H2.6 Q1 7.3 1 5.8z" fill="none" stroke="#6f8fe6" stroke-width=".9"/><path d="M2.3 1.8 V5.2 L3.6 6.4" fill="none" stroke="#6f8fe6" stroke-width=".7"/></svg>
<div class="a" style="left:99.60px;top:199.77px;width:39px;height:11.6px;border-radius:1.5px;background:#7840d8"></div>
<div class="t" style="left:19.099999999999994px;width:200px;text-align:center;top:202.72px;font-size:6.5px;color:#fff;font-weight:normal;-webkit-text-stroke:.25px #fff">New</div>
<div class="t" style="left:89.0px;width:200px;text-align:center;top:202.40px;font-size:7.14px;color:#5a5d78;font-weight:normal;">26-08-2025 9:48</div>
<div class="t" style="left:227.9px;top:202.37px;font-size:7.2px;color:#5a5d78;font-weight:normal;">N/A</div>
<div class="a" style="left:298.30px;top:199.77px;width:31.5px;height:11.6px;border-radius:1.5px;background:#f8f8fa;border:1px solid #ededf0"></div>
<div class="t" style="left:302.5px;top:202.82px;font-size:6.3px;color:#5f6275;font-weight:normal;">Develop</div>
<div class="t" style="left:396.9px;top:202.37px;font-size:7.2px;color:#5a5d78;font-weight:normal;">final</div>
<div class="a" style="left:0px;top:213.16px;width:418.5px;height:0.7px;background:#efeff2"></div>
<div class="a" style="left:13.30px;top:217.76px;width:6.4px;height:6.4px;border-radius:50%;background:#f27212;border:1px solid #a94a14"></div>
<div class="t" style="left:38.0px;top:217.51px;font-size:7.3px;color:#5a5d78;font-weight:normal;">8c077ce...</div>
<svg style="left:76.3px;top:216.76px" width="7" height="8" viewBox="0 0 7 8"><path d="M1 .7 H6 V5.5 Q6 7.3 4.2 7.3 H2.6 Q1 7.3 1 5.8z" fill="none" stroke="#6f8fe6" stroke-width=".9"/><path d="M2.3 1.8 V5.2 L3.6 6.4" fill="none" stroke="#6f8fe6" stroke-width=".7"/></svg>
<div class="a" style="left:99.60px;top:214.96px;width:39px;height:11.6px;border-radius:1.5px;background:#7840d8"></div>
<div class="t" style="left:19.099999999999994px;width:200px;text-align:center;top:217.91px;font-size:6.5px;color:#fff;font-weight:normal;-webkit-text-stroke:.25px #fff">New</div>
<div class="t" style="left:89.0px;width:200px;text-align:center;top:217.59px;font-size:7.14px;color:#5a5d78;font-weight:normal;">26-08-2025 9:39</div>
<div class="t" style="left:227.9px;top:217.56px;font-size:7.2px;color:#5a5d78;font-weight:normal;">ELA SALES</div>
<div class="a" style="left:298.30px;top:214.96px;width:31.5px;height:11.6px;border-radius:1.5px;background:#f8f8fa;border:1px solid #ededf0"></div>
<div class="t" style="left:302.5px;top:218.01px;font-size:6.3px;color:#5f6275;font-weight:normal;">Develop</div>
<div class="t" style="left:396.9px;top:217.56px;font-size:7.2px;color:#5a5d78;font-weight:normal;">final</div>
<div class="a" style="left:0px;top:228.35px;width:418.5px;height:0.7px;background:#efeff2"></div>
<div class="a" style="left:13.30px;top:232.95px;width:6.4px;height:6.4px;border-radius:50%;background:#f27212;border:1px solid #a94a14"></div>
<div class="t" style="left:38.0px;top:232.70px;font-size:7.3px;color:#5a5d78;font-weight:normal;">fce17c5...</div>
<svg style="left:76.3px;top:231.95px" width="7" height="8" viewBox="0 0 7 8"><path d="M1 .7 H6 V5.5 Q6 7.3 4.2 7.3 H2.6 Q1 7.3 1 5.8z" fill="none" stroke="#6f8fe6" stroke-width=".9"/><path d="M2.3 1.8 V5.2 L3.6 6.4" fill="none" stroke="#6f8fe6" stroke-width=".7"/></svg>
<div class="a" style="left:99.60px;top:230.15px;width:39px;height:11.6px;border-radius:1.5px;background:#7840d8"></div>
<div class="t" style="left:19.099999999999994px;width:200px;text-align:center;top:233.10px;font-size:6.5px;color:#fff;font-weight:normal;-webkit-text-stroke:.25px #fff">New</div>
<div class="t" style="left:89.0px;width:200px;text-align:center;top:232.78px;font-size:7.14px;color:#5a5d78;font-weight:normal;">25-08-2025 15:59</div>
<div class="t" style="left:227.9px;top:232.75px;font-size:7.2px;color:#5a5d78;font-weight:normal;">shadrach akd</div>
<div class="a" style="left:298.30px;top:230.15px;width:31.5px;height:11.6px;border-radius:1.5px;background:#f8f8fa;border:1px solid #ededf0"></div>
<div class="t" style="left:302.5px;top:233.20px;font-size:6.3px;color:#5f6275;font-weight:normal;">Develop</div>
<div class="t" style="left:396.9px;top:232.75px;font-size:7.2px;color:#5a5d78;font-weight:normal;">test</div>
<div class="a" style="left:0px;top:243.54px;width:418.5px;height:0.7px;background:#efeff2"></div>
<div class="a" style="left:13.30px;top:248.14px;width:6.4px;height:6.4px;border-radius:50%;background:#f27212;border:1px solid #a94a14"></div>
<div class="t" style="left:38.0px;top:247.89px;font-size:7.3px;color:#5a5d78;font-weight:normal;">718c646...</div>
<svg style="left:76.3px;top:247.14px" width="7" height="8" viewBox="0 0 7 8"><path d="M1 .7 H6 V5.5 Q6 7.3 4.2 7.3 H2.6 Q1 7.3 1 5.8z" fill="none" stroke="#6f8fe6" stroke-width=".9"/><path d="M2.3 1.8 V5.2 L3.6 6.4" fill="none" stroke="#6f8fe6" stroke-width=".7"/></svg>
<div class="a" style="left:99.60px;top:245.34px;width:39px;height:11.6px;border-radius:1.5px;background:#7840d8"></div>
<div class="t" style="left:19.099999999999994px;width:200px;text-align:center;top:248.29px;font-size:6.5px;color:#fff;font-weight:normal;-webkit-text-stroke:.25px #fff">New</div>
<div class="t" style="left:89.0px;width:200px;text-align:center;top:247.97px;font-size:7.14px;color:#5a5d78;font-weight:normal;">25-08-2025 15:57</div>
<div class="t" style="left:227.9px;top:247.94px;font-size:7.2px;color:#5a5d78;font-weight:normal;">N/A</div>
<div class="a" style="left:298.30px;top:245.34px;width:31.5px;height:11.6px;border-radius:1.5px;background:#f8f8fa;border:1px solid #ededf0"></div>
<div class="t" style="left:302.5px;top:248.39px;font-size:6.3px;color:#5f6275;font-weight:normal;">Develop</div>
<div class="t" style="left:396.9px;top:247.94px;font-size:7.2px;color:#5a5d78;font-weight:normal;">agair</div>
</div>
<div class="a" style="left:1031.5px;top:216.8px;width:4.5px;height:42px;background:#9a9ca4;border-radius:2px"></div>
<div class="a" style="left:617px;top:470.5px;width:203px;height:3.6px;background:#999ba0;border-radius:2px"></div>
<div class="rz" style="left:1034px;top:473px"></div>
<div class="t" style="left:4px;top:503.46px;font-size:7.48px;color:#5d607c;font-weight:normal;">Copyright</div>
<div class="t" style="left:41.7px;top:503.70px;font-size:7px;color:#5d607c;font-weight:normal;">©</div>
<div class="t" style="left:51.7px;top:503.60px;font-size:7.2px;color:#5d607c;font-weight:normal;">2025</div>
<div class="t" style="left:71.7px;top:503.67px;font-size:7.06px;color:#5d607c;font-weight:normal;">CRM Version</div>
<div class="t" style="left:118.3px;top:503.41px;font-size:7.58px;color:#3d5fc0;font-weight:normal;">v1.100.47</div>
<svg style="left:154.5px;top:502.5px" width="8" height="9" viewBox="0 0 8 9"><path d="M1 .7 H6.5 V6 Q6.5 8.2 4.5 8.2 H2.8 Q1 8.2 1 6.4z" fill="none" stroke="#4f7fe6" stroke-width="1"/><path d="M2.5 2 V5.8 L3.9 7.2" fill="none" stroke="#4f7fe6" stroke-width=".8"/></svg>
<svg style="left:167.5px;top:502.7px" width="8" height="8" viewBox="0 0 8 8"><circle cx="3.8" cy="3.8" r="3.2" fill="none" stroke="#e8a23a" stroke-width=".9"/><path d="M3.8 1.9V4.3M3.8 5.1V5.8" stroke="#e8a23a" stroke-width=".9"/></svg>
<div class="t" style="left:177.7px;top:503.77px;font-size:6.85px;color:#e8a23a;font-weight:normal;">1 invoice pending</div>
<div class="a" style="left:0px;top:514.8px;width:1080px;height:3.2px;background:#ebe2d4"></div>
<svg style="left:1063.5px;top:40.5px" width="9" height="9" viewBox="0 0 9 9"><rect x=".5" y="1.5" width="8" height="7" rx=".8" fill="#4a4e86"/><path d="M2.5 0v2M6.5 0v2" stroke="#4a4e86" stroke-width="1"/></svg>
<svg style="left:1062px;top:68.5px" width="12" height="8" viewBox="0 0 12 8"><circle cx="6" cy="2" r="1.8" fill="#4a4e86"/><circle cx="2.3" cy="3" r="1.4" fill="#4a4e86"/><circle cx="9.7" cy="3" r="1.4" fill="#4a4e86"/><path d="M2.8 8 Q3 4.5 6 4.5 Q9 4.5 9.2 8z M0 8 Q0 5 2.3 5 Q3.3 5 3.6 5.5 M12 8 Q12 5 9.7 5 Q8.7 5 8.4 5.5" fill="#4a4e86"/></svg>
<svg style="left:1062.5px;top:97px" width="11" height="9" viewBox="0 0 11 9"><circle cx="4" cy="2.2" r="2" fill="#4a4e86"/><path d="M0 8.5 Q0 5 4 5 Q6 5 6.8 6 V8.5z" fill="#4a4e86"/><circle cx="8.7" cy="6.5" r="2.1" fill="none" stroke="#4a4e86" stroke-width="1"/></svg>
<svg style="left:1062.5px;top:121.5px" width="10" height="11" viewBox="0 0 10 11"><circle cx="5" cy="5" r="4.5" fill="#9a9dbf"/><circle cx="5" cy="5" r="2.5" fill="#f1f2f6"/><circle cx="5" cy="5" r="1.3" fill="#6a6e9a"/><path d="M5 6v4.5" stroke="#6a6e9a" stroke-width="1.4"/></svg>
<svg style="left:1061px;top:152px" width="13" height="9" viewBox="0 0 13 9"><path d="M0 2 L3.5 1.2 L6.5 2.5 L9.5 1.2 L13 2 V6.5 L10 8.3 L6.5 7 L3 8.3 L0 6.5z" fill="#4a4e86"/><path d="M3.5 4.5 L6.5 3.2 L9.5 4.5" fill="none" stroke="#f1f2f6" stroke-width=".8"/></svg>
<svg style="left:1063.5px;top:181px" width="9" height="11" viewBox="0 0 9 11"><rect x=".3" y="1.5" width="8.4" height="9.3" rx=".8" fill="#4a4e86"/><rect x="2.8" y=".3" width="3.4" height="2" rx=".5" fill="#4a4e86"/><path d="M2.3 6.3 L3.9 7.8 L6.8 4.6" fill="none" stroke="#fff" stroke-width="1.1"/></svg>
<svg style="left:1062.5px;top:210px" width="11" height="8" viewBox="0 0 11 8"><rect x="0" y="0" width="11" height="8" rx=".6" fill="#cbcde0"/><path d="M.3 .5 L5.5 4.5 L10.7 .5" fill="none" stroke="#f1f2f6" stroke-width=".8"/></svg>
<svg style="left:1062.5px;top:235px" width="11" height="11" viewBox="0 0 11 11"><path d="M1.5 1.8 Q1.5 .8 2.6 .8 L3.6 3.2 L2.9 4.1 Q4.3 6.7 6.7 7.9 L7.6 7.2 L10 8.2 Q10 9.8 8.7 9.8 Q3 9 1.5 1.8z" fill="#4a4e86"/><path d="M6.8 .8 L9.8 3.8 M9.8 .8 L6.8 3.8" stroke="#4a4e86" stroke-width="1.1"/></svg>
<div class="a" style="left:1033.5px;top:25.5px;width:20px;height:20px;border-radius:50%;background:#0b63d6"></div>
<svg style="left:1038px;top:30px" width="11" height="11" viewBox="0 0 11 11"><path d="M4.52 2.56 L4.81 1.25 L6.19 1.25 L6.48 2.56 L7.56 3.18 L8.83 2.78 L9.52 3.97 L8.54 4.87 L8.54 6.13 L9.52 7.03 L8.83 8.22 L7.56 7.82 L6.48 8.44 L6.19 9.75 L4.81 9.75 L4.52 8.44 L3.44 7.82 L2.17 8.22 L1.48 7.03 L2.46 6.13 L2.46 4.87 L1.48 3.97 L2.17 2.78 L3.44 3.18z" fill="#fff" stroke="#fff" stroke-width=".6" stroke-linejoin="round"/><circle cx="5.5" cy="5.5" r="1.5" fill="#5a9ae8"/></svg>
<div class="a" style="left:1057.8px;top:489.5px;width:21px;height:21px;border-radius:50%;background:#3d6fe8"></div>
<svg style="left:1065.3px;top:496px" width="6" height="8" viewBox="0 0 6 8"><path d="M1.5 1 L4.5 4 L1.5 7" fill="none" stroke="#fff" stroke-width="1.2"/></svg>
</body></html>
